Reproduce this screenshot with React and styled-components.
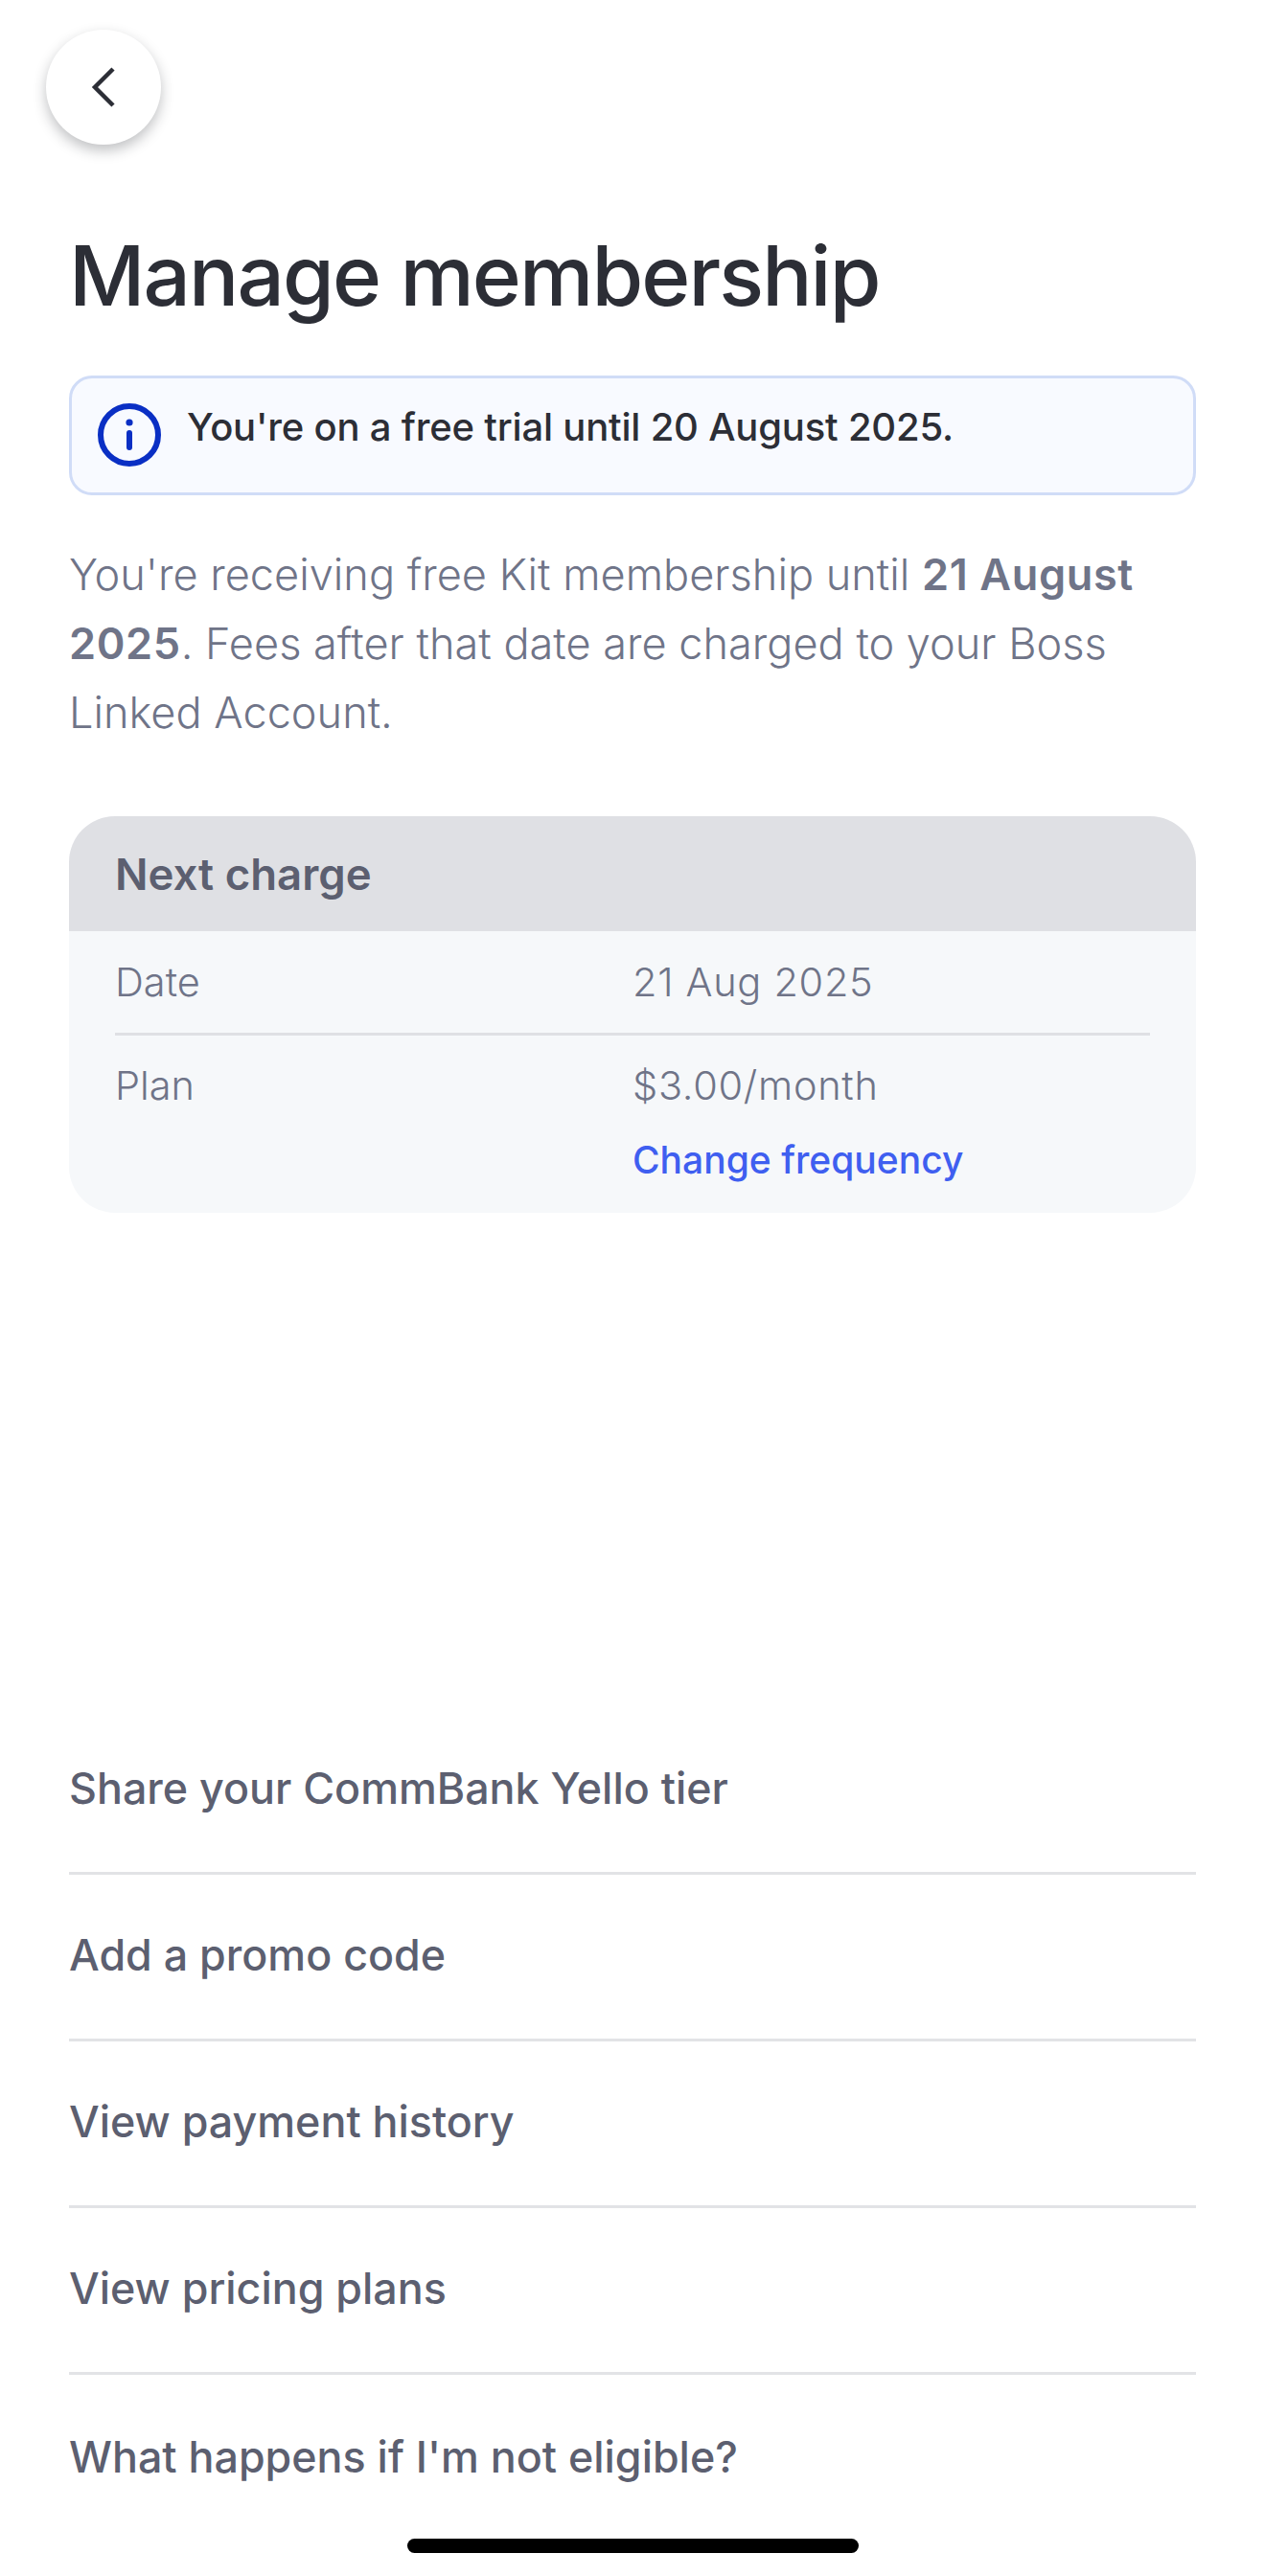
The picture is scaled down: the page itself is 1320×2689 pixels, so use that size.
import React from 'react'
import styled, { createGlobalStyle } from 'styled-components'

const GlobalStyle = createGlobalStyle`
    html, body {
        margin: 0;
        padding: 0;
        background: #ffffff;
    }
    * {
        box-sizing: border-box;
    }
`

const Page = styled.div`
    width: 1320px;
    height: 2689px;
    padding: 31px 72px 0;
    display: flex;
    flex-direction: column;
    font-family: Inter, "Liberation Sans", sans-serif;
    overflow: hidden;
`

const BackButton = styled.button`
    width: 120px;
    height: 120px;
    margin-left: -24px;
    padding: 0;
    border: 0;
    border-radius: 50%;
    background: #ffffff;
    box-shadow: 0 6px 14px rgba(30, 32, 40, 0.28);
    display: flex;
    align-items: center;
    justify-content: center;
`

const Title = styled.h1`
    margin: 82px 0 0;
    font-size: 87px;
    line-height: 110px;
    font-weight: 500;
    letter-spacing: -1.9px;
    color: #2c2e36;
`

const Banner = styled.div`
    margin-top: 49px;
    height: 125px;
    padding: 26px 27px;
    display: flex;
    gap: 27px;
    background: #f8faff;
    border: 3px solid #d0dcf7;
    border-radius: 24px;
`

const BannerText = styled.div`
    font-size: 40px;
    line-height: 48px;
    font-weight: 500;
    letter-spacing: -0.2px;
    color: #2c2e36;
    margin-top: 1px;
`

const Intro = styled.p`
    margin: 47px 0 0;
    font-size: 45.1px;
    line-height: 72px;
    font-weight: 300;
    color: #6f7488;

    strong {
        font-weight: 600;
        letter-spacing: 0.6px;
    }
`

const Card = styled.section`
    margin-top: 72px;
    background: #f6f8fa;
    border-radius: 48px;
    overflow: hidden;
`

const CardHeader = styled.div`
    height: 120px;
    padding: 0 48px;
    display: flex;
    align-items: center;
    background: #dfe0e4;
    font-size: 45.5px;
    font-weight: 600;
    color: #5c5f70;
`

const CardBody = styled.div`
    padding: 0 48px;
    height: 294px;
`

const CardRow = styled.div`
    display: grid;
    grid-template-columns: 540px 1fr;
    height: ${props => props.$height}px;
    padding-top: ${props => props.$top}px;
    border-bottom: ${props => props.$divided ? '3px solid #dfe0e4' : '0'};
    font-size: 41.5px;
    line-height: 54px;
    font-weight: 300;
    color: #6f7488;
`

const CardValue = styled.div`
    letter-spacing: 0.7px;
`

const ChangeLink = styled.a`
    display: block;
    margin-top: 24px;
    font-size: 39px;
    font-weight: 500;
    letter-spacing: 0;
    color: #3f5ff0;
`

const LinkList = styled.ul`
    margin: 517px 0 0;
    padding: 0;
    list-style: none;
`

const LinkRow = styled.li`
    height: 174px;
    padding-bottom: 3px;
    display: flex;
    align-items: center;
    border-bottom: ${props => props.$last ? '0' : '3px solid #e2e3e6'};
    font-size: 44.8px;
    font-weight: 500;
    color: #5c5f70;
`

const HomeIndicator = styled.div`
    position: absolute;
    left: 425px;
    top: 2650px;
    width: 471px;
    height: 15px;
    border-radius: 8px;
    background: #000000;
`

const links = [
    'Share your CommBank Yello tier',
    'Add a promo code',
    'View payment history',
    'View pricing plans',
    "What happens if I'm not eligible?",
]

function BackIcon() {
    return (
        <svg width="30" height="44" viewBox="0 0 30 44" fill="none">
            <path d="M25 3 L6 22 L25 41" stroke="#2c2e36" strokeWidth="4.5" />
        </svg>
    )
}

function InfoIcon() {
    return (
        <svg width="66" height="66" viewBox="0 0 66 66" fill="none" style={{ flexShrink: 0 }}>
            <circle cx="33" cy="33" r="30" stroke="#0a2fc4" strokeWidth="6" />
            <circle cx="33" cy="20" r="3.6" fill="#0a2fc4" />
            <path d="M33 31 V46" stroke="#0a2fc4" strokeWidth="6" strokeLinecap="round" />
        </svg>
    )
}

export default function App() {
    return (
        <Page>
            <GlobalStyle />
            <BackButton aria-label="Back"><BackIcon /></BackButton>
            <Title>Manage membership</Title>
            <Banner>
                <InfoIcon />
                <BannerText>You're on a free trial until 20 August 2025.</BannerText>
            </Banner>
            <Intro>
                You're receiving free Kit membership until <strong>21 August 2025</strong>. Fees after that date are charged to your Boss Linked Account.
            </Intro>
            <Card>
                <CardHeader>Next charge</CardHeader>
                <CardBody>
                    <CardRow $height={109} $top={26} $divided>
                        <span>Date</span>
                        <CardValue>21 Aug 2025</CardValue>
                    </CardRow>
                    <CardRow $height={185} $top={25}>
                        <span>Plan</span>
                        <CardValue>
                            $3.00/month
                            <ChangeLink>Change frequency</ChangeLink>
                        </CardValue>
                    </CardRow>
                </CardBody>
            </Card>
            <LinkList>
                {links.map((text, i) => (
                    <LinkRow key={text} $last={i === links.length - 1}>{text}</LinkRow>
                ))}
            </LinkList>
            <HomeIndicator />
        </Page>
    )
}
